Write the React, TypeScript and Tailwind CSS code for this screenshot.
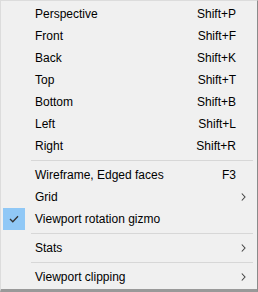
import React from 'react';

type Item =
  | { kind: 'item'; label: string; shortcut?: string; submenu?: boolean; checked?: boolean }
  | { kind: 'sep' };

const items: Item[] = [
  { kind: 'item', label: 'Perspective', shortcut: 'Shift+P' },
  { kind: 'item', label: 'Front', shortcut: 'Shift+F' },
  { kind: 'item', label: 'Back', shortcut: 'Shift+K' },
  { kind: 'item', label: 'Top', shortcut: 'Shift+T' },
  { kind: 'item', label: 'Bottom', shortcut: 'Shift+B' },
  { kind: 'item', label: 'Left', shortcut: 'Shift+L' },
  { kind: 'item', label: 'Right', shortcut: 'Shift+R' },
  { kind: 'sep' },
  { kind: 'item', label: 'Wireframe, Edged faces', shortcut: 'F3' },
  { kind: 'item', label: 'Grid', submenu: true },
  { kind: 'item', label: 'Viewport rotation gizmo', checked: true },
  { kind: 'sep' },
  { kind: 'item', label: 'Stats', submenu: true },
  { kind: 'sep' },
  { kind: 'item', label: 'Viewport clipping', submenu: true },
];

const Chevron = () => (
  <svg width="5" height="8" viewBox="0 0 5 8" className="block">
    <path d="M0.8 0.5 L4 4 L0.8 7.5" fill="none" stroke="#444" strokeWidth="1.1" />
  </svg>
);

const Check = () => (
  <svg width="10" height="8" viewBox="0 0 10 8" className="block">
    <path d="M1 4 L3.8 6.8 L9 1.2" fill="none" stroke="#333" strokeWidth="1.3" />
  </svg>
);

export default function App() {
  return (
    <div
      className="w-[258px] h-[292px] bg-[#f0f0f0] border-t border-l border-[#dcdcdc] border-r border-r-[#8a8a8a] border-b-[3px] border-b-[#999999] pt-[2px] px-[2px] text-[12px] text-black"
      style={{ fontFamily: '"Liberation Sans", Arial, sans-serif' }}
    >
      {items.map((it, i) =>
        it.kind === 'sep' ? (
          <div key={i} className="h-[7px] flex items-center pl-[28px] pr-[2px]">
            <div className="h-px w-full bg-[#d7d7d7]" />
          </div>
        ) : (
          <div key={i} className="h-[22px] flex items-center">
            <div className="w-[22px] h-[22px] flex items-center justify-center shrink-0">
              {it.checked && (
                <div className="w-[22px] h-[22px] bg-[#90c8f6] flex items-center justify-center">
                  <Check />
                </div>
              )}
            </div>
            <div className="flex-1 pl-[10px] whitespace-nowrap leading-none">{it.label}</div>
            {it.shortcut && <div className="whitespace-nowrap leading-none">{it.shortcut}</div>}
            <div className="w-[19px] h-full flex items-center pl-[5px] shrink-0">
              {it.submenu && <Chevron />}
            </div>
          </div>
        )
      )}
    </div>
  );
}
